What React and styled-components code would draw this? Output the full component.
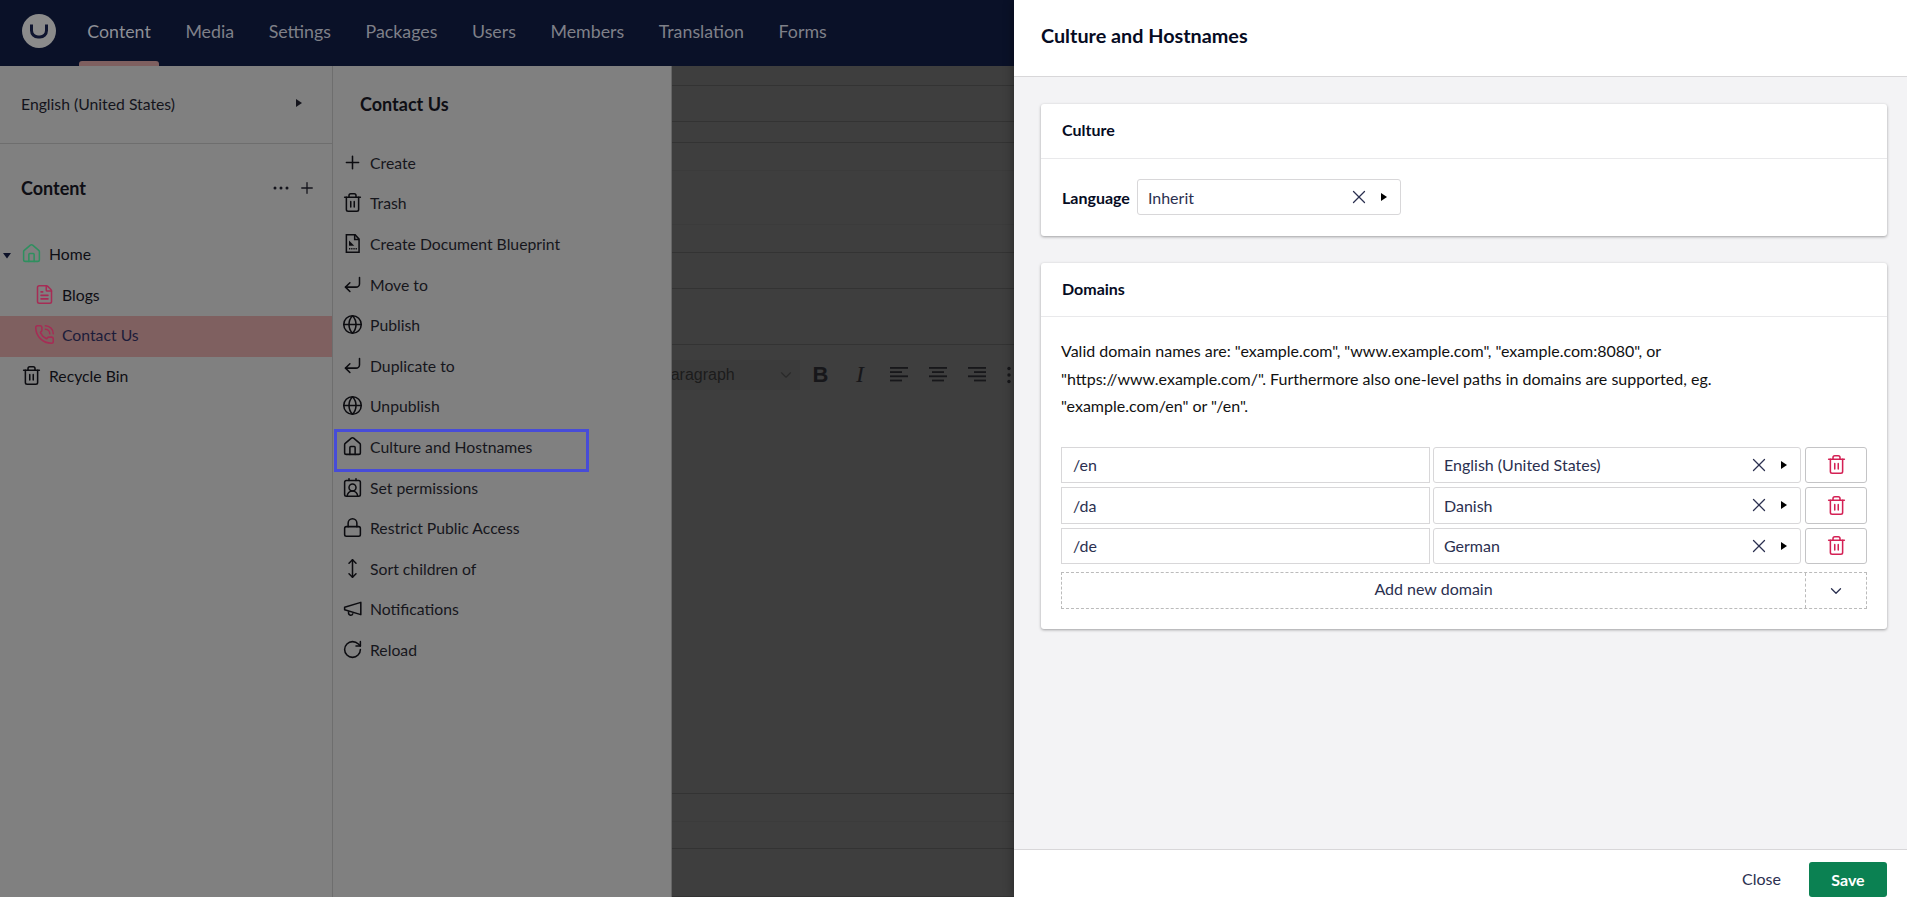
import React from "react";
import styled, { createGlobalStyle } from "styled-components";
import {
  ChevronDown,
  CornerDownLeft,
  ContactRound,
  FileText,
  Globe,
  House,
  Lock,
  MoveVertical,
  PhoneCall,
  Plus,
  RotateCw,
  Trash2,
  X,
} from "lucide-react";

const GlobalStyle = createGlobalStyle`
  html, body { margin: 0; padding: 0; height: 100%; overflow: hidden; }
  body { font-family: Lato, "Liberation Sans", sans-serif; font-size: 16px; }
  * { box-sizing: border-box; }
`;

const navItems = ["Content", "Media", "Settings", "Packages", "Users", "Members", "Translation", "Forms"];

// small icons lucide has no close match for
const Blueprint = (props) => (
  <svg width="21" height="21" viewBox="0 0 24 24" fill="none" stroke="currentColor" strokeWidth="1.5" {...props}>
    <path d="M5 2h10l4.500 5v15H5z" />
    <path d="M14.500 2v5.500H19.500" />
    <path d="M8 8.500v6h6z" fill="currentColor" stroke="none" />
    <path d="M8 18h9" strokeDasharray="1.500 1" />
  </svg>
);

const Megaphone = (props) => (
  <svg width="21" height="21" viewBox="0 0 24 24" fill="none" stroke="currentColor" strokeWidth="1.75" strokeLinejoin="round" {...props}>
    <path d="M21.500 5 3 10.500v3L21.500 19z" />
    <path d="M7.500 15v1.800a2.500 2.500 0 0 0 5 .6" />
  </svg>
);

const Caret = ({ down, ...props }) => (
  <svg width="8" height="10" viewBox="0 0 8 10" {...props}>
    <path d={down ? "M0 2h8L4 7.500z" : "M1 1l6 4-6 4z"} fill="currentColor" />
  </svg>
);

const Dots = () => (
  <svg width="18" height="6" viewBox="0 0 18 6">
    <circle cx="3" cy="3" r="1.500" fill="currentColor" />
    <circle cx="9" cy="3" r="1.500" fill="currentColor" />
    <circle cx="15" cy="3" r="1.500" fill="currentColor" />
  </svg>
);

const Kebab = () => (
  <svg width="6" height="18" viewBox="0 0 6 18">
    <circle cx="3" cy="2.500" r="1.700" fill="currentColor" />
    <circle cx="3" cy="9" r="1.700" fill="currentColor" />
    <circle cx="3" cy="15.500" r="1.700" fill="currentColor" />
  </svg>
);

const Bars = ({ align }) => {
  const rows = [18, 12, 18, 12];
  return (
    <svg width="18" height="15" viewBox="0 0 18 15">
      {rows.map((w, i) => {
        const x = align === "left" ? 0 : align === "right" ? 18 - w : (18 - w) / 2;
        return <rect key={i} x={x} y={i * 4.2} width={w} height="1.800" fill="currentColor" />;
      })}
    </svg>
  );
};

const menuItems = [
  ["Create", Plus],
  ["Trash", Trash2],
  ["Create Document Blueprint", Blueprint],
  ["Move to", CornerDownLeft],
  ["Publish", Globe],
  ["Duplicate to", CornerDownLeft],
  ["Unpublish", Globe],
  ["Culture and Hostnames", House],
  ["Set permissions", ContactRound],
  ["Restrict Public Access", Lock],
  ["Sort children of", MoveVertical],
  ["Notifications", Megaphone],
  ["Reload", RotateCw],
];

const upperLines = [20, 36, 21, 28, 54, 28, 36, 56];
const lowerLines = [28, 27, 48];
const domains = [
  ["/en", "English (United States)"],
  ["/da", "Danish"],
  ["/de", "German"],
];

const App = () => {
  return (
    <Frame>
      <GlobalStyle />
      <Backoffice>
        <TopBar>
          <Logo>
            <svg width="20" height="16" viewBox="0 0 20 16" fill="none">
              <path d="M2.500 1.500v6a6.500 6.500 0 0 0 6.500 6.500h2a6.500 6.500 0 0 0 6.500-6.500v-6" stroke="#0f1530" strokeWidth="3" />
            </svg>
          </Logo>
          <Nav>
            {navItems.map((n, i) => (
              <NavItem key={n} $active={i === 0}>
                {n}
              </NavItem>
            ))}
          </Nav>
        </TopBar>
        <Main>
          <Sidebar>
            <LanguagePicker>
              <span>English (United States)</span>
              <Caret />
            </LanguagePicker>
            <SectionHead>
              <SectionTitle>Content</SectionTitle>
              <HeadActions>
                <Dots />
                <Plus size={18} strokeWidth={1.75} />
              </HeadActions>
            </SectionHead>
            <Tree>
              <TreeRow $indent={49}>
                <TreeCaret>
                  <Caret down />
                </TreeCaret>
                <TreeIcon $color="#2f8f5f">
                  <House size={21} strokeWidth={1.75} />
                </TreeIcon>
                Home
              </TreeRow>
              <TreeRow $indent={62}>
                <TreeIcon $color="#a62c55">
                  <FileText size={21} strokeWidth={1.75} />
                </TreeIcon>
                Blogs
              </TreeRow>
              <TreeRow $indent={62} $current>
                <TreeIcon $color="#a62c55">
                  <PhoneCall size={21} strokeWidth={1.75} />
                </TreeIcon>
                Contact Us
              </TreeRow>
              <TreeRow $indent={49}>
                <TreeIcon $color="#0c0c10">
                  <Trash2 size={21} strokeWidth={1.75} />
                </TreeIcon>
                Recycle Bin
              </TreeRow>
            </Tree>
          </Sidebar>
          <ActionMenu>
            <MenuTitle>Contact Us</MenuTitle>
            <MenuList>
              {menuItems.map(([label, Icon]) => (
                <MenuItem key={label} $focused={label === "Culture and Hostnames"}>
                  <MenuIcon>
                    <Icon size={21} strokeWidth={1.75} />
                  </MenuIcon>
                  {label}
                </MenuItem>
              ))}
            </MenuList>
          </ActionMenu>
          <Workspace>
            {upperLines.map((h, i) => (
              <LineRow key={i} $h={h} $faint={i === 3 || i === 4} />
            ))}
            <Toolbar>
              <BlockSelect>
                Paragraph
                <ChevronDown size={18} strokeWidth={1.5} />
              </BlockSelect>
              <ToolBold>B</ToolBold>
              <ToolItalic>I</ToolItalic>
              <ToolBars>
                <Bars align="left" />
              </ToolBars>
              <ToolBars>
                <Bars align="center" />
              </ToolBars>
              <ToolBars>
                <Bars align="right" />
              </ToolBars>
              <ToolMore>
                <Kebab />
              </ToolMore>
            </Toolbar>
            <Editor />
            {lowerLines.map((h, i) => (
              <LineRow key={i} $h={h} $faint={i === 0} />
            ))}
          </Workspace>
        </Main>
      </Backoffice>

      <Drawer>
        <DrawerHead>Culture and Hostnames</DrawerHead>
        <DrawerBody>
          <Card>
            <CardHead>Culture</CardHead>
            <LanguageRow>
              <strong>Language</strong>
              <SelectBox $w="264px">
                <SelectText>Inherit</SelectText>
                <X size={22} strokeWidth={1.4} />
                <SelectCaret>
                  <Caret />
                </SelectCaret>
              </SelectBox>
            </LanguageRow>
          </Card>
          <Card>
            <CardHead>Domains</CardHead>
            <DomainBody>
              <Help>
                Valid domain names are: "example.com", "www.example.com", "example.com:8080", or
                "https://www.example.com/". Furthermore also one-level paths in domains are supported, eg.
                "example.com/en" or "/en".
              </Help>
              <DomainGrid>
                {domains.map(([path, lang]) => (
                  <React.Fragment key={path}>
                    <PathInput>{path}</PathInput>
                    <SelectBox>
                      <SelectText>{lang}</SelectText>
                      <X size={22} strokeWidth={1.4} />
                      <SelectCaret>
                        <Caret />
                      </SelectCaret>
                    </SelectBox>
                    <DeleteButton>
                      <Trash2 size={21} strokeWidth={1.75} />
                    </DeleteButton>
                  </React.Fragment>
                ))}
                <AddRow>
                  <AddLabel>Add new domain</AddLabel>
                  <AddMore>
                    <ChevronDown size={18} strokeWidth={1.75} />
                  </AddMore>
                </AddRow>
              </DomainGrid>
            </DomainBody>
          </Card>
        </DrawerBody>
        <DrawerFoot>
          <CloseLink>Close</CloseLink>
          <SaveButton>Save</SaveButton>
        </DrawerFoot>
      </Drawer>
    </Frame>
  );
};

const Frame = styled.div`
  display: flex;
  width: 1907px;
  height: 897px;
  overflow: hidden;
`;
const Backoffice = styled.div`
  width: 1014px;
  flex: none;
  display: flex;
  flex-direction: column;
`;
const TopBar = styled.header`
  height: 66px;
  flex: none;
  background: #0a1128;
  display: flex;
  align-items: stretch;
  padding-left: 22px;
`;
const Logo = styled.div`
  width: 34px;
  height: 34px;
  margin-top: 14px;
  border-radius: 50%;
  background: #8b8b8b;
  display: flex;
  align-items: center;
  justify-content: center;
`;
const Nav = styled.nav`
  display: flex;
  margin-left: 14px;
`;
const NavItem = styled.div`
  position: relative;
  display: flex;
  align-items: center;
  padding: 0 17.300px 4px;
  font-size: 17.800px;
  color: ${(p) => (p.$active ? "#8d8f96" : "#7f8088")};
  ${(p) =>
    p.$active &&
    `&::after {
      content: "";
      position: absolute;
      left: 9px;
      right: 9px;
      bottom: 0;
      height: 5px;
      background: #7f6060;
      border-radius: 3px 3px 0 0;
    }`}
`;
const Main = styled.div`
  flex: 1;
  display: flex;
  min-height: 0;
`;
const Sidebar = styled.aside`
  width: 333px;
  flex: none;
  background: #808080;
  border-right: 1px solid #6e6e6e;
  color: #0e0e14;
`;
const LanguagePicker = styled.div`
  height: 78px;
  border-bottom: 1px solid #6e6e6e;
  display: flex;
  align-items: center;
  justify-content: space-between;
  padding: 0 29px 3px 21px;
  font-size: 15.750px;
  color: #14141c;
`;
const SectionHead = styled.div`
  height: 90px;
  display: flex;
  align-items: center;
  justify-content: space-between;
  padding: 0 16px 2px 21px;
`;
const SectionTitle = styled.h2`
  margin: 0;
  font-size: 18px;
  font-weight: 700;
`;
const HeadActions = styled.div`
  display: flex;
  align-items: center;
  gap: 8px;
  color: #14141c;
`;
const Tree = styled.div`
  margin-top: 1px;
`;
const TreeRow = styled.div`
  position: relative;
  height: 40.600px;
  display: flex;
  align-items: center;
  padding-left: ${(p) => p.$indent}px;
  padding-bottom: 3px;
  font-size: 15.750px;
  background: ${(p) => (p.$current ? "#7f6060" : "transparent")};
  color: ${(p) => (p.$current ? "#1c1c3a" : "#0e0e14")};
`;
const TreeCaret = styled.span`
  position: absolute;
  left: 3px;
  top: 10px;
  color: #0c1128;
`;
const TreeIcon = styled.span`
  position: absolute;
  margin-left: -28px;
  display: flex;
  color: ${(p) => p.$color};
`;
const ActionMenu = styled.div`
  width: 338px;
  flex: none;
  background: #808080;
`;
const MenuTitle = styled.h3`
  margin: 0;
  height: 76px;
  display: flex;
  align-items: center;
  padding-left: 27px;
  font-size: 18px;
  font-weight: 700;
  color: #0e0e14;
`;
const MenuList = styled.div`
  width: 256px;
`;
const MenuItem = styled.div`
  position: relative;
  height: 40.600px;
  display: flex;
  align-items: center;
  gap: 7px;
  padding-left: 9px;
  font-size: 15.750px;
  color: #16161c;
  ${(p) =>
    p.$focused &&
    `&::after {
      content: "";
      position: absolute;
      inset: 3px 0 -5px 1px;
      border: 3px solid #474cd8;
    }`}
`;
const MenuIcon = styled.span`
  display: flex;
  color: #0c0c10;
`;
const Workspace = styled.main`
  flex: 1;
  min-width: 0;
  display: flex;
  flex-direction: column;
  overflow: hidden;
  background: #3e3e3e;
  border-left: 1px solid #666;
  color: #17171a;
`;
const LineRow = styled.div`
  height: ${(p) => p.$h}px;
  flex: none;
  border-bottom: 1px solid ${(p) => (p.$faint ? "#3b3b3b" : "#333")};
`;
const Toolbar = styled.div`
  height: 56px;
  flex: none;
  display: flex;
  align-items: center;
  padding-top: 3px;
`;
const BlockSelect = styled.div`
  width: 140px;
  height: 30px;
  margin-left: -12px;
  flex: none;
  display: flex;
  align-items: center;
  justify-content: space-between;
  padding-right: 5px;
  background: #3b3b3b;
  font-family: "Liberation Sans", Arial, sans-serif;
  font-size: 16px;
  color: #1c1c1c;
  svg {
    color: #2a2a2a;
  }
`;
const ToolBold = styled.b`
  width: 41px;
  flex: none;
  text-align: center;
  font-family: "Liberation Sans", Arial, sans-serif;
  font-size: 22px;
`;
const ToolItalic = styled.i`
  width: 38px;
  flex: none;
  text-align: center;
  font-family: "Liberation Serif", serif;
  font-size: 24px;
`;
const ToolBars = styled.span`
  width: 39px;
  flex: none;
  display: flex;
  justify-content: center;
`;
const ToolMore = styled.span`
  width: 26px;
  flex: none;
  display: flex;
  justify-content: center;
`;
const Editor = styled.div`
  flex: 1;
  border-bottom: 1px solid #333;
`;
const Drawer = styled.section`
  position: relative;
  z-index: 2;
  flex: 1;
  min-width: 0;
  display: flex;
  flex-direction: column;
  background: #f3f3f5;
  box-shadow: 0 0 10px rgba(0, 0, 0, 0.4);
  color: #060b23;
`;
const DrawerHead = styled.div`
  height: 77px;
  flex: none;
  display: flex;
  align-items: center;
  padding: 0 27px 6px;
  background: #fff;
  border-bottom: 1px solid #d8d7d9;
  font-size: 19.800px;
  font-weight: 700;
`;
const DrawerBody = styled.div`
  flex: 1;
  padding: 27px 20px 0 27px;
  display: flex;
  flex-direction: column;
  gap: 27px;
`;
const Card = styled.div`
  background: #fff;
  border-radius: 3px;
  box-shadow: 0 1px 3px rgba(0, 0, 0, 0.35);
`;
const CardHead = styled.div`
  height: 54.500px;
  display: flex;
  align-items: center;
  padding: 0 21px 2px;
  border-bottom: 1px solid #e9e9eb;
  font-size: 16px;
  font-weight: 700;
`;
const LanguageRow = styled.div`
  height: 77px;
  display: flex;
  align-items: center;
  gap: 7px;
  padding: 0 21px;
  font-size: 16px;
`;
const SelectBox = styled.div`
  height: 36.500px;
  width: ${(p) => p.$w || "auto"};
  display: flex;
  align-items: center;
  padding: 0 12px 0 10px;
  border: 1px solid #d8d7d9;
  border-radius: 3px;
  color: #2b3050;
  svg {
    flex: none;
  }
`;
const SelectText = styled.span`
  flex: 1;
`;
const SelectCaret = styled.span`
  display: flex;
  margin-left: 10px;
  color: #000;
`;
const DomainBody = styled.div`
  padding: 20px;
`;
const Help = styled.p`
  margin: 0 0 27px;
  max-width: 780px;
  font-size: 16px;
  line-height: 27.500px;
  color: #111;
`;
const DomainGrid = styled.div`
  display: grid;
  grid-template-columns: 368.500px 367.500px 63px;
  column-gap: 3.500px;
  row-gap: 4px;
`;
const PathInput = styled.div`
  height: 36.500px;
  display: flex;
  align-items: center;
  padding-left: 11px;
  border: 1px solid #d8d7d9;
  color: #2b3050;
`;
const DeleteButton = styled.div`
  height: 36.500px;
  margin-left: 1px;
  display: flex;
  align-items: center;
  justify-content: center;
  border: 1px solid #c4c4c6;
  border-radius: 3px;
  color: #d42054;
`;
const AddRow = styled.div`
  grid-column: 1 / -1;
  height: 37px;
  margin-top: 4px;
  display: flex;
  border: 1px dashed #bbb;
  color: #2b3050;
`;
const AddLabel = styled.div`
  flex: 1;
  display: flex;
  align-items: center;
  justify-content: center;
  padding-bottom: 4px;
`;
const AddMore = styled.div`
  width: 61px;
  display: flex;
  align-items: center;
  justify-content: center;
  border-left: 1px dashed #bbb;
`;
const DrawerFoot = styled.div`
  height: 48px;
  flex: none;
  display: flex;
  align-items: flex-start;
  justify-content: flex-end;
  gap: 28px;
  padding: 12px 20px 0 0;
  background: #fff;
  border-top: 1px solid #d8d7d9;
`;
const CloseLink = styled.span`
  line-height: 33px;
  color: #2b3050;
`;
const SaveButton = styled.div`
  width: 78px;
  height: 35px;
  display: flex;
  align-items: center;
  justify-content: center;
  background: #0b8152;
  border-radius: 3px;
  color: #fff;
  font-weight: 700;
`;

export default App;
